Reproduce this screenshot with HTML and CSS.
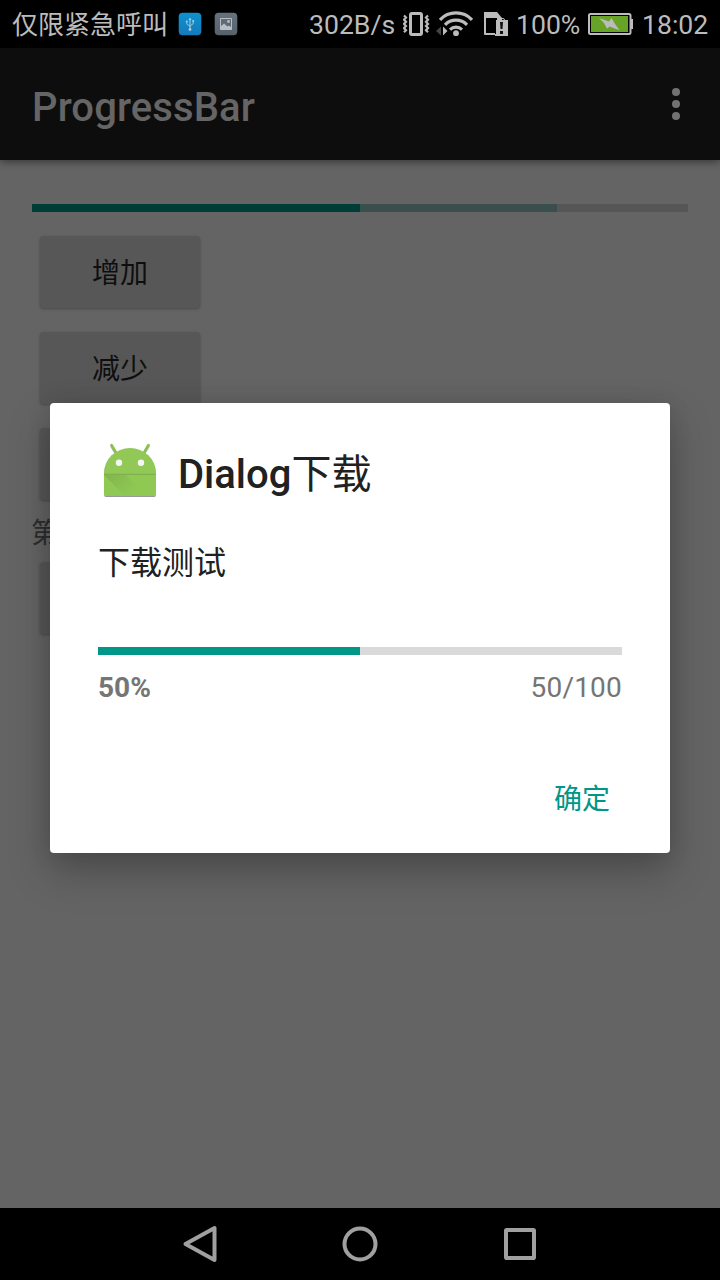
FILE: index.html
```html
<!DOCTYPE html>
<html lang="zh-CN">
<head>
<meta charset="utf-8">
<title>ProgressBar</title>
<link rel="stylesheet" href="styles.css">
</head>
<body>
<div class="screen">
  <header class="status">
    <span class="carrier">仅限紧急呼叫</span>
    <svg class="usb" width="24" height="24" viewBox="0 0 24 24">
      <defs><linearGradient id="blue" x2="0" y2="1"><stop stop-color="#0c93cf"/><stop offset="1" stop-color="#1679ba"/></linearGradient></defs>
      <rect x=".7" y=".7" width="22.6" height="22.6" rx="4" fill="url(#blue)"/>
      <path d="M12 7v10M8.800 9.500v2.200c0 1.400 3.200 1.300 3.200 3M15.200 9v2.200c0 1.800-3.200 1.500-3.200 3" fill="none" stroke="#a9cbdc" stroke-width="1"/>
      <path d="M10.500 8 12 5.500 13.500 8z" fill="#a9cbdc"/><circle cx="12" cy="17.500" r="1.400" fill="#a9cbdc"/><circle cx="8.800" cy="9.500" r="1" fill="#a9cbdc"/><path d="M14.300 8h1.800v1.800h-1.800z" fill="#a9cbdc"/>
    </svg>
    <svg class="photo" width="24" height="24" viewBox="0 0 24 24">
      <defs><linearGradient id="slate" x2="0" y2="1"><stop stop-color="#66727e"/><stop offset="1" stop-color="#56616b"/></linearGradient></defs>
      <rect x=".7" y=".7" width="22.600" height="22.600" rx="4" fill="url(#slate)"/>
      <path d="M6.500 6.500h11v11h-11z" fill="none" stroke="#b8bec3" stroke-width="1"/>
      <path d="M6.500 17.500v-3l3.500-3 3.500 3 1.500-1 2.500 2v2z" fill="#b8bec3"/><circle cx="14.500" cy="9.500" r="1.400" fill="#b8bec3"/>
    </svg>
    <span class="speed">302B/s</span>
    <svg class="vibrate" width="28" height="26" viewBox="0 0 28 26" fill="none" stroke="#bcbcbc">
      <rect x="7.500" y="2.500" width="11" height="21" rx="1.500" stroke-width="3"/>
      <path d="m1 4.500 2 2.100-2 2.100 2 2.100-2 2.100 2 2.100-2 2.100 2 2.100-2 2.100M25 4.500l-2 2.100 2 2.100-2 2.100 2 2.100-2 2.100 2 2.100-2 2.100 2 2.100" stroke-width="2.200"/>
    </svg>
    <svg class="wifi" width="38" height="26" viewBox="0 0 38 26" fill="none">
      <path d="M4 8.800a22 22 0 0 1 32 0M9 13.800a15.500 15.500 0 0 1 22 0M14 18.600a8.700 8.700 0 0 1 12 0" stroke="#bcbcbc" stroke-width="3.200"/>
      <circle cx="20" cy="22.200" r="2.900" fill="#bcbcbc"/>
      <path d="M5 15.500v9L0 20z" fill="#444"/><path d="M7 15.500v9l4.500-4.500z" fill="#bcbcbc"/>
    </svg>
    <svg class="sim" width="26" height="26" viewBox="0 0 26 26">
      <path d="M1 1h13l5 6v17H2q-1 0-1-1z" fill="#bcbcbc"/><path d="M3 7h11v15H3z" fill="#000"/>
      <path d="M12 9h13v16H12z" fill="#bcbcbc"/><path d="M14.500 9.500V9q0-1.500 1.500-1.500h4Q21.500 7.500 21.500 9v.5" fill="none" stroke="#bcbcbc"/><path d="M12.500 9v14" stroke="#000"/>
      <path d="M17 11h3l-.5 7h-2zM17 20h3v3h-3z" fill="#111"/>
    </svg>
    <span class="percent">100%</span>
    <svg class="battery" width="46" height="24" viewBox="0 0 46 24">
      <rect x="1" y="2" width="41.500" height="20" rx="1.500" fill="#000" stroke="#bcbcbc" stroke-width="2"/>
      <path d="M43 7h2v10h-2z" fill="#bcbcbc"/><path d="M3 4h37v16H3z" fill="#67a327"/>
      <path d="m11 6 10 3.500L23.500 6l3.500 6 4.500 6.200-10-3.700-2.500 2.200L16 11z" fill="#bcbcbc"/>
    </svg>
    <span class="clock">18:02</span>
  </header>
  <div class="appbar">
    <h1>ProgressBar</h1>
    <div class="dots"><i></i><i></i><i></i></div>
  </div>
  <main class="content">
    <div class="bar"><div class="bar-second"></div><div class="bar-first"></div></div>
    <button class="btn">增加</button>
    <button class="btn">减少</button>
    <button class="btn"></button>
    <p class="label">第</p>
    <button class="btn"></button>
  </main>
  <nav class="nav">
    <svg width="48" height="48" viewBox="0 0 48 48"><path d="M38.500 8v32L9.500 24z"/></svg>
    <svg width="48" height="48" viewBox="0 0 48 48"><circle cx="24" cy="24" r="15.500"/></svg>
    <svg width="48" height="48" viewBox="0 0 48 48"><rect x="10" y="10" width="28" height="28" rx=".8"/></svg>
  </nav>
  <section class="dialog">
    <div class="dialog-head">
      <svg width="64" height="64" viewBox="0 0 64 64">
        <defs>
          <linearGradient id="fold" x1="6" y1="36" x2="30" y2="60" gradientUnits="userSpaceOnUse"><stop stop-color="#7dac48"/><stop offset="1" stop-color="#8fc954"/></linearGradient>
          <filter id="drop"><feDropShadow dx="0" dy="1" stdDeviation=".7" flood-opacity=".4"/></filter>
        </defs>
        <g filter="url(#drop)">
          <path d="m13.500 6 5 8.500M50.500 6l-5 8.500" stroke="#8bbf53" stroke-width="2.600" stroke-linecap="round"/>
          <path d="M6 34a26 25 0 0 1 52 0v21q0 2-2 2H8q-2 0-2-2z" fill="#92c855"/>
        </g>
        <path d="M6 36h52v19q0 2-2 2H8q-2 0-2-2z" fill="#8fc954"/>
        <path d="m6 36 21 21h22L28 36z" fill="url(#fold)" opacity=".7"/>
        <path d="M6 35.300h52" stroke="#80b14c" stroke-width="1.200"/>
        <circle cx="21" cy="23.700" r="3.200" fill="#f5f5f5"/><circle cx="43" cy="23.700" r="3.200" fill="#f5f5f5"/>
      </svg>
      <h2>Dialog<span>下载</span></h2>
    </div>
    <p class="message">下载测试</p>
    <div class="progress"><div class="progress-fill"></div></div>
    <div class="numbers"><b>50%</b><span>50/100</span></div>
    <button class="ok">确定</button>
  </section>
</div>
</body>
</html>
```
FILE: styles.css
```css
* { box-sizing: border-box; }
body { margin: 0; font-family: Roboto, "Noto Sans CJK SC", sans-serif; }
h1, h2, p { margin: 0; font-weight: 400; }
button { border: 0; padding: 0; font-family: inherit; }
svg { display: block; flex: none; }

.screen { position: relative; width: 720px; height: 1280px; overflow: hidden; display: flex; flex-direction: column; background: #646464; }

.status { height: 48px; flex: none; display: flex; align-items: center; padding-left: 12px; background: #000; color: #bcbcbc; font-size: 26.600px; white-space: nowrap; }
.status span { flex: none; line-height: 48px; padding-top: 1px; height: 48px; }
.status .carrier { width: 166px; font-size: 26px; }
.photo { margin-left: 12px; }
.status .speed { width: 94px; margin-left: 71px; }
.wifi { margin-left: 5px; }
.sim { margin-left: 9px; }
.status .percent { width: 72px; margin-left: 7px; }
.status .clock { margin-left: 8px; }

.appbar { height: 112px; flex: none; display: flex; align-items: center; justify-content: space-between; padding: 4px 40px 0 32px; background: #0d0d0d; color: #656565; box-shadow: 0 2px 8px rgba(0, 0, 0, .45); z-index: 1; }
h1 { padding-top: 3px; font-size: 40px; font-weight: 500; line-height: 48px; letter-spacing: .1px; }
.dots { display: flex; flex-direction: column; gap: 4px; margin-bottom: 4px; }
.dots i { width: 8px; height: 8px; border-radius: 50%; background: #727272; }

.content { flex: 1; padding: 44px 32px 0; }
.bar { display: grid; height: 8px; margin-bottom: 24px; background: #565656; }
.bar > div { grid-area: 1 / 1; }
.bar-second { width: 80%; background: #3a4f4d; }
.bar-first { width: 50%; background: #003d37; }
.btn { display: block; width: 160px; height: 72px; margin: 0 8px 24px; padding-top: 4px; border-radius: 4px; background: #575757; color: #0e0e0e; font-size: 28px; line-height: 68px; box-shadow: 0 1px 3px rgba(0, 0, 0, .28); }
.label { margin: -12px 0 0 -1px; height: 50px; padding-top: 2px; font-size: 28px; line-height: 40px; color: #2d2d2d; }

.nav { height: 72px; flex: none; display: flex; align-items: center; justify-content: center; gap: 112px; background: #000; }
.nav path, .nav circle, .nav rect { fill: none; stroke: #a0a0a0; stroke-width: 4; stroke-linejoin: round; }

.dialog { position: absolute; left: 50px; top: 403px; z-index: 2; width: 620px; height: 450px; padding: 36px 48px 0; border-radius: 4px; background: #fff; color: #212121; box-shadow: 0 18px 42px rgba(0, 0, 0, .25), 0 2px 22px rgba(0, 0, 0, .1); }
.dialog-head { display: flex; height: 64px; align-items: center; gap: 16px; }
h2 { font-size: 40px; font-weight: 500; line-height: 64px; padding-top: 7px; }
h2 span { font-weight: 400; }
.message { margin-top: 36px; height: 48px; font-size: 32px; line-height: 48px; }
.progress { margin-top: 60px; height: 8px; background: #dadada; }
.progress-fill { width: 50%; height: 100%; background: #009688; }
.numbers { margin-top: 16px; display: flex; justify-content: space-between; font-size: 28px; line-height: 33px; color: #757575; }
.numbers span { letter-spacing: .2px; }
.ok { display: block; width: 56px; margin: 76px 12px 0 auto; background: none; color: #009688; font-size: 28px; line-height: 40px; }
```
